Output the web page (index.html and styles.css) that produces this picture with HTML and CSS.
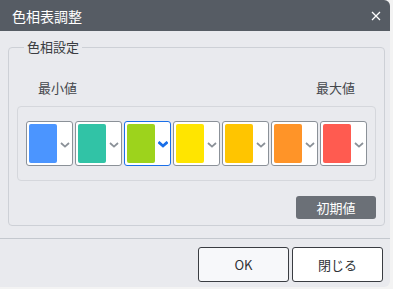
FILE: index.html
```html
<!DOCTYPE html>
<html lang="ja">
<head>
  <meta charset="UTF-8">
  <title>色相表調整</title>
  <link rel="stylesheet" href="styles.css">
</head>
<body>
  <div class="dialog">
    <div class="titlebar">
      <span class="title">色相表調整</span>
      <svg class="close" width="10" height="10" viewBox="0 0 10 10"><path d="M1 1 L9 9 M9 1 L1 9" stroke="#fff" stroke-width="1.3" fill="none"/></svg>
    </div>
    <div class="content">
      <fieldset class="group">
        <legend>色相設定</legend>
        <div class="labels">
          <span>最小値</span>
          <span>最大値</span>
        </div>
        <div class="swatches">
          <div class="swatch"><span class="chip" style="background:#4b95ff"></span><svg class="chev" width="10" height="6" viewBox="0 0 10 6"><path d="M1 1 L5 4.6 L9 1" stroke="#8b9198" stroke-width="1.8" fill="none"/></svg></div>
          <div class="swatch"><span class="chip" style="background:#31c3a6"></span><svg class="chev" width="10" height="6" viewBox="0 0 10 6"><path d="M1 1 L5 4.6 L9 1" stroke="#8b9198" stroke-width="1.8" fill="none"/></svg></div>
          <div class="swatch active"><span class="chip" style="background:#9dd31c"></span><svg class="chev" width="10" height="7" viewBox="0 0 10 7"><path d="M0.5 1 L5 5 L9.5 1" stroke="#1a6fe8" stroke-width="2.8" fill="none"/></svg></div>
          <div class="swatch"><span class="chip" style="background:#ffe500"></span><svg class="chev" width="10" height="6" viewBox="0 0 10 6"><path d="M1 1 L5 4.6 L9 1" stroke="#8b9198" stroke-width="1.8" fill="none"/></svg></div>
          <div class="swatch"><span class="chip" style="background:#ffc500"></span><svg class="chev" width="10" height="6" viewBox="0 0 10 6"><path d="M1 1 L5 4.6 L9 1" stroke="#8b9198" stroke-width="1.8" fill="none"/></svg></div>
          <div class="swatch"><span class="chip" style="background:#ff9428"></span><svg class="chev" width="10" height="6" viewBox="0 0 10 6"><path d="M1 1 L5 4.6 L9 1" stroke="#8b9198" stroke-width="1.8" fill="none"/></svg></div>
          <div class="swatch"><span class="chip" style="background:#ff5b50"></span><svg class="chev" width="10" height="6" viewBox="0 0 10 6"><path d="M1 1 L5 4.6 L9 1" stroke="#8b9198" stroke-width="1.8" fill="none"/></svg></div>
        </div>
        <div class="reset-row">
          <button class="reset">初期値</button>
        </div>
      </fieldset>
    </div>
    <div class="footer">
      <button class="btn ok">OK</button>
      <button class="btn">閉じる</button>
    </div>
  </div>
</body>
</html>
```

FILE: styles.css
```css
html, body { margin: 0; padding: 0; }
body { background: #f3f3f3; font-family: "Noto Sans CJK JP", "Noto Sans", sans-serif; font-size: 13px; color: #3a3d42; }
.dialog { width: 390px; height: 287px; background: #e9eaee; border-radius: 0 6px 6px 0; overflow: hidden; display: flex; flex-direction: column; }
.titlebar { height: 31px; flex: none; background: #565c64; color: #fff; display: flex; align-items: center; justify-content: space-between; padding: 0 9px 0 12px; }
.title { font-size: 14px; line-height: 18px; }
.close { display: block; }
.content { flex: 1; padding: 7px 7px 0 8px; }
.group { margin: 0; padding: 23px 8px 7px 8px; border: 1px solid #cdd0d6; border-radius: 4px; height: 188px; box-sizing: border-box; }
.group legend { padding: 0 3px; margin-left: 7px; line-height: 18px; font-size: 13px; color: #3a3d42; }
.labels { display: flex; justify-content: space-between; padding: 0 21px; line-height: 18px; color: #44474c; }
.swatches { margin-top: 9px; border: 1px solid #d5d7dc; border-radius: 4px; padding: 14px 8px 14px 8px; display: flex; gap: 2px; }
.swatch { width: 47px; height: 45px; box-sizing: border-box; border: 1px solid #8b9198; border-radius: 3px; background: #fff; display: flex; align-items: center; padding: 2px; }
.swatch.active { border-color: #1a6fe8; }
.chip { width: 28px; height: 39px; border-radius: 2px; flex: none; }
.chev { margin-left: 3px; margin-top: 2px; }
.reset-row { display: flex; justify-content: flex-end; margin-top: 15px; }
.reset { width: 80px; height: 23px; border: none; border-radius: 3px; background: #6b7077; color: #fff; font-family: inherit; font-size: 13px; padding: 0; }
.footer { height: 49px; flex: none; border-top: 1px solid #c4c8ce; display: flex; justify-content: flex-end; gap: 3px; padding: 8px 7px 0 0; box-sizing: border-box; }
.btn { width: 91px; height: 35px; border: 1px solid #3a3d42; border-radius: 3px; background: #fff; font-family: inherit; font-size: 13px; color: #2f3236; padding: 0; }
.btn.ok { background: #f7f8fa; }
```
